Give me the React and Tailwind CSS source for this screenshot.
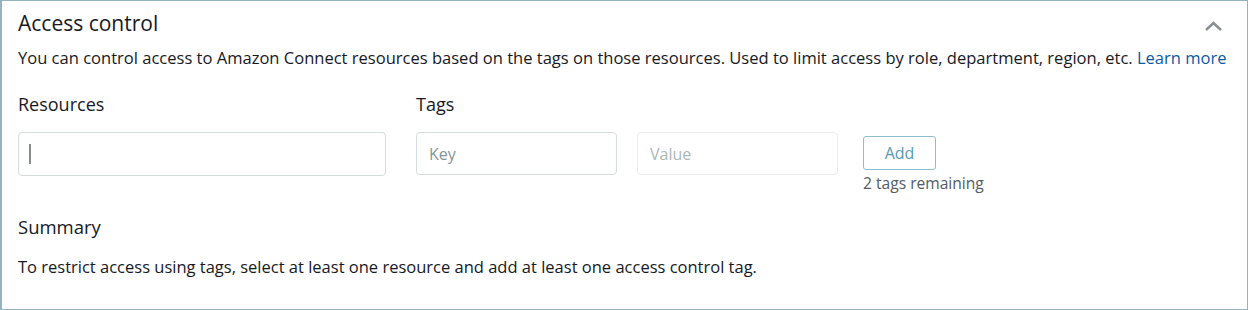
import React, { useState } from 'react'

export default function App() {
  const [tagKey, setTagKey] = useState('')
  const [tagValue, setTagValue] = useState('')

  return (
    <div
      className="h-[310px] w-[1248px] bg-white"
      style={{ fontFamily: '"Open Sans", "Noto Sans", sans-serif' }}
    >
      <div className="h-full border border-l-2 border-[#93b3c3] px-[16px] pt-[7px]">
        <div className="flex items-center justify-between">
          <h2 className="text-[21px] leading-[30px] text-[#16191f]">Access control</h2>
          <svg className="mr-[8px] mt-[6px] h-[12px] w-[19px]" viewBox="0 0 19 12" fill="none">
            <path d="M2 10 L9.5 3 L17 10" stroke="#8a8f94" strokeWidth="2.4" />
          </svg>
        </div>
        <p className="mt-[9px] whitespace-nowrap text-[16.55px] leading-[22px] text-[#16191f]">
          You can control access to Amazon Connect resources based on the tags on those resources. Used to limit access by role, department, region, etc.{' '}
          <a href="#" className="text-[#0b5aa6]">Learn more</a>
        </p>

        <div className="mt-[23px] flex">
          <div className="w-[398px]">
            <div className="text-[18px] leading-[24px] text-[#16191f]">Resources</div>
            <div className="mt-[16px] flex h-[44px] w-[368px] items-center rounded-[4px] border border-[#d5dbdb] px-[10px]">
              <span className="h-[20px] w-[2px] bg-[#8a8a8a]" />
            </div>
          </div>
          <div>
            <div className="text-[18px] leading-[24px] text-[#16191f]">Tags</div>
            <div className="mt-[16px] flex items-start">
              <input
                value={tagKey}
                onChange={(e) => setTagKey(e.target.value)}
                placeholder="Key"
                className="h-[43px] w-[201px] rounded-[4px] border border-[#d5dbdb] px-3 text-[16px] text-[#16191f] outline-none placeholder:text-[#879596]"
              />
              <input
                value={tagValue}
                onChange={(e) => setTagValue(e.target.value)}
                placeholder="Value"
                disabled
                className="ml-[20px] h-[43px] w-[201px] rounded-[4px] border border-[#eaeded] bg-white px-3 text-[16px] outline-none placeholder:text-[#aab7b8]"
              />
              <div className="ml-[25px] mt-[4px]">
                <button
                  type="button"
                  className="h-[34px] w-[73px] rounded-[3px] border border-[#8cbdd1] bg-white text-[16px] text-[#5899b4]"
                >
                  Add
                </button>
                <div className="mt-[3px] text-[15.6px] leading-[20px] text-[#545b64]">2 tags remaining</div>
              </div>
            </div>
          </div>
        </div>

        <div className="mt-[22px] text-[18.5px] leading-[24px] text-[#16191f]">Summary</div>
        <p className="mt-[18px] text-[16.5px] leading-[20px] text-[#16191f]">
          To restrict access using tags, select at least one resource and add at least one access control tag.
        </p>
      </div>
    </div>
  )
}
